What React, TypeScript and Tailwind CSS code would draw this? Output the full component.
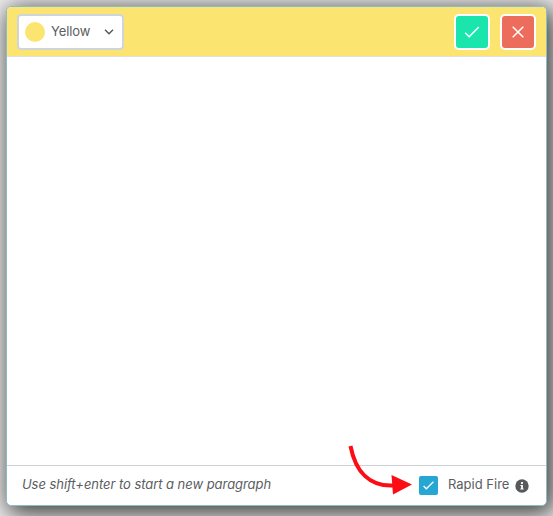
export default function App() {
  return (
    <main className="h-[516px] w-[553px] overflow-hidden bg-[#f0f0f0] p-1.5 font-['Lato','Open_Sans',sans-serif] text-[#5b5d5f]">
      <section className="flex h-[500px] w-[541px] flex-col overflow-hidden rounded-[5px] border border-[#8bbcc7] bg-white shadow-[4px_5px_24px_3px_rgba(0,0,0,0.75)]">
        <header className="flex h-[50px] shrink-0 items-center border-b border-[#dfdfdf] bg-[#fbe570] pl-2.5 pr-2.5">
          <button className="flex h-9 w-[107px] items-center rounded-[4px] border-2 border-[#d0d5da] bg-white pl-1.5 pr-2">
            <span className="size-5 rounded-full bg-[#fbe570]" />
            <span className="mb-0.5 ml-1.5 font-['Inter',sans-serif] text-[13px] leading-5 tracking-[-0.1px]">Yellow</span>
            <svg className="ml-auto" width="10" height="6" viewBox="0 0 10 6" fill="none" stroke="#555759" strokeWidth="1.4">
              <path d="M1 .8 5 4.8 9 .8" />
            </svg>
          </button>
          <button aria-label="Save" className="ml-auto flex size-9 items-center justify-center rounded-[5px] border-2 border-white bg-[#19e5ad]">
            <svg width="16" height="12" viewBox="0 0 16 12" fill="none" stroke="white" strokeWidth="1.5"><path d="m1.200 6.800 4 4L14.800 1" /></svg>
          </button>
          <button aria-label="Close" className="ml-2.5 flex size-9 items-center justify-center rounded-[5px] border-2 border-white bg-[#ed6d5d]">
            <svg width="12" height="12" viewBox="0 0 12 12" fill="none" stroke="white" strokeWidth="1.5"><path d="m.7.7 10.6 10.6m0-10.6L.7 11.3" /></svg>
          </button>
        </header>
        <div className="flex-1" />
        <footer className="relative flex h-10 shrink-0 items-center border-t border-[#cfd2d5] pl-[15px] pr-[17px]">
          <p className="mb-[3px] whitespace-nowrap font-['Inter',sans-serif] text-[13px] italic leading-5 tracking-[-0.05px] [font-feature-settings:'cv11']">Use shift+enter to start a new paragraph</p>
          <span className="ml-auto flex size-[19px] items-center justify-center rounded-[2px] bg-[#25a6d3]">
            <svg width="11" height="9" viewBox="0 0 11 9" fill="none" stroke="white" strokeWidth="1.3"><path d="m.6 5 2.700 2.800L10.400.8" /></svg>
          </span>
          <span className="mb-[3px] ml-2.5 w-[62px] whitespace-nowrap font-['Inter',sans-serif] text-[13px] leading-5">Rapid Fire</span>
          <svg className="ml-[5px]" width="14" height="14" viewBox="0 0 14 14">
            <circle cx="7" cy="7" r="6.700" fill="#58595b" />
            <path d="M6.100 3.100h1.800v1.800H6.100zM5.400 6h2.500v3.500h.7v1H5.400v-1h.7V7h-.7z" fill="white" />
          </svg>
          <svg className="pointer-events-none absolute left-[340px] top-[-22px]" width="68" height="54" viewBox="0 0 68 54">
            <path d="M3.500 2C8.500 28 23 43 47 41.500" fill="none" stroke="#fc0d15" strokeWidth="4" />
            <path d="M44.500 31 65 40.500 46 50.500Z" fill="#fc0d15" />
          </svg>
        </footer>
      </section>
    </main>
  );
}
